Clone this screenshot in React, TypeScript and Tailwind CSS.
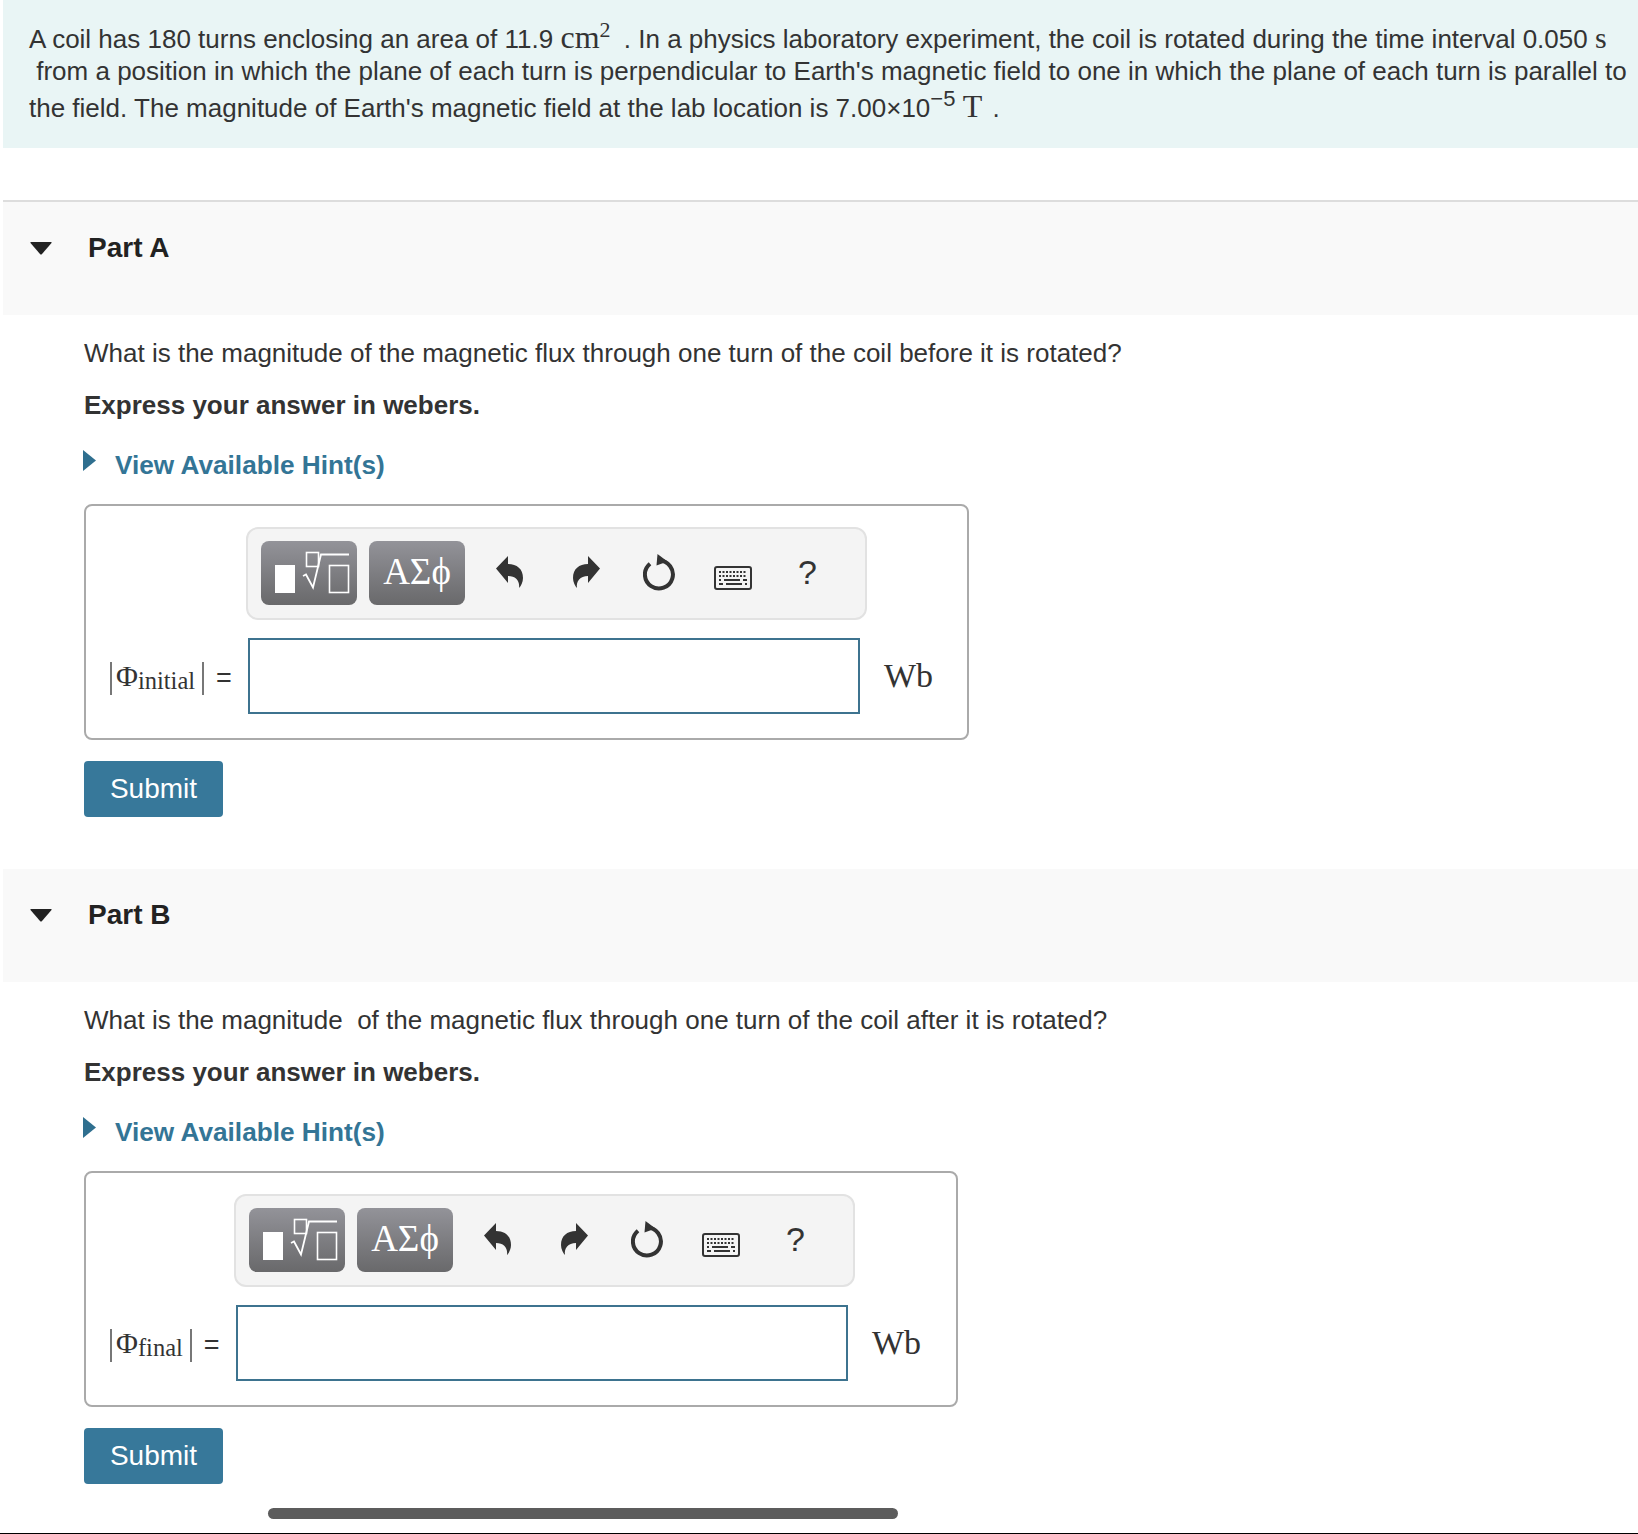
const serif = "font-['Liberation_Serif',serif]";

function ReplyIcon({ className }: { className: string }) {
  return (
    <svg className={className} width="27" height="32" viewBox="0 0 27 32">
      <path d="M0 12.5L12 0v8c9 0 15 5 15 14 0 4-2 8-4 10 1-7-3-12-11-12v7z" fill="#333" />
    </svg>
  );
}

function Toolbar({ left }: { left: number }) {
  return (
    <div
      className="flex h-[93px] w-[621px] items-start rounded-xl border-2 border-[#e2e2e2] bg-[#f4f4f4] pl-[13px] pt-3"
      style={{ marginLeft: left }}
    >
      <div className="h-16 w-24 rounded-lg bg-gradient-to-b from-[#939399] to-[#69696b]">
        <svg width="96" height="64" viewBox="0 0 96 64" fill="none" stroke="#fff" strokeWidth="1.6">
          <rect x="14" y="24" width="20" height="28" fill="#fff" stroke="none" />
          <rect x="45.5" y="11.5" width="12" height="14" />
          <path d="M42 35l3-1.500 7 13 8-33h28" strokeWidth="1.8" />
          <rect x="68.500" y="24.500" width="19" height="27" />
        </svg>
      </div>
      <div className={`ml-3 flex h-16 w-24 items-center justify-center rounded-lg bg-gradient-to-b from-[#939399] to-[#69696b] pb-1 text-[37px] leading-none text-white ${serif}`}>
        ΑΣϕ
      </div>
      <ReplyIcon className="ml-[31px] mt-[15px]" />
      <ReplyIcon className="ml-[50px] mt-[15px] -scale-x-100" />
      <svg className="ml-[43px] mt-[13px]" width="32" height="38" viewBox="0 0 32 38" fill="none">
        <path d="M7 9.700A14 14 0 1 0 16 6.500" stroke="#333" strokeWidth="4" />
        <path d="M14.500 0l10 7.500-11 4z" fill="#333" />
      </svg>
      <svg className="ml-[39px] mt-[25px]" width="38" height="24" viewBox="0 0 38 24" fill="none">
        <rect x="1" y="1" width="36" height="22" rx="2" stroke="#333" strokeWidth="2" />
        <path d="M5 6h28M5 10h28" stroke="#333" strokeWidth="2" strokeDasharray="2 1.500" />
        <path d="M5 14h2M10 14h16M29 14h4M5 18h4M12 18h16M31 18h2" stroke="#333" strokeWidth="2" />
      </svg>
      <div className="ml-[46px] mt-[11px] text-[34px] leading-[40px] text-[#333]">?</div>
    </div>
  );
}

function Part({
  name,
  question,
  sub,
  labelWidth,
  unitGap,
}: {
  name: string;
  question: string;
  sub: string;
  labelWidth: number;
  unitGap: number;
}) {
  return (
    <section>
      <div className="flex h-[113px] items-start bg-[#f9f9f9] pl-[27px] pt-[30px]">
        <svg className="mt-[10px]" width="22" height="13" viewBox="0 0 22 13">
          <path d="M1 0h20q1 0 .5 1L12 12q-1 1-2 0L.5 1Q0 0 1 0z" fill="#222" />
        </svg>
        <h2 className="ml-[36px] text-[28px] font-bold leading-[32px] text-[#222]">{name}</h2>
      </div>
      <div className="pl-[81px]">
        <p className="mt-[22px] text-[26px] leading-[32px] text-[#333] whitespace-pre">{question}</p>
        <p className="mt-5 text-[26px] font-bold leading-[32px] text-[#333]">Express your answer in webers.</p>
        <div className="mt-7 flex h-8 items-start">
          <svg className="-ml-px mt-[1px]" width="13" height="21" viewBox="0 0 13 21">
            <path d="M0 0l13 10.500L0 21z" fill="#2f6f8f" />
          </svg>
          <span className="ml-[19px] text-[26.2px] font-bold leading-[32px] text-[#337596]">View Available Hint(s)</span>
        </div>
        <div className="mt-[23px] w-fit rounded-lg border-2 border-[#aaa] pb-6 pt-[21px]">
          <Toolbar left={labelWidth - 2} />
          <div className="mt-[18px] flex items-center">
            <div className={`flex items-center pl-6 text-[#333] ${serif}`} style={{ width: labelWidth }}>
              <span className="mt-1 h-[33px] w-0 border-l-2 border-[#777]" />
              <span className="ml-1 text-[30px] leading-none">Φ</span>
              <span className="mt-[10px] text-[24.5px] leading-none">{sub}</span>
              <span className="ml-[7px] mt-1 h-[33px] w-0 border-l-2 border-[#777]" />
              <span className="ml-3 mt-1 font-['Liberation_Sans',sans-serif] text-[27px] leading-none">=</span>
            </div>
            <div className="h-[76px] w-[612px] border-2 border-[#3d738f] bg-white" />
            <div className={`ml-6 pb-[2px] text-[34px] text-[#333] ${serif}`} style={{ marginRight: unitGap }}>Wb</div>
          </div>
        </div>
        <button className="mt-[21px] block h-14 w-[139px] rounded bg-[#37789a] text-[28px] text-white">Submit</button>
      </div>
    </section>
  );
}

export default function App() {
  return (
    <div className="flex h-[1534px] w-[1638px] flex-col overflow-hidden border-b border-black bg-white pl-[3px] font-['Liberation_Sans',sans-serif]">
      <div className="h-[148px] whitespace-pre bg-[#e9f5f5] pl-[26px] pt-[21px] text-[26px] leading-[32px] text-[#333]">
        <p>
          A coil has 180 turns enclosing an area of 11.9 <span className={`text-[32px] ${serif}`}>cm<sup className="text-[22px]">2</sup></span> <span className="ml-[6px]">.</span> In a physics laboratory experiment, the coil is rotated during the time interval 0.050 <span className={`text-[30px] ${serif}`}>s</span>
        </p>
        <p> from a position in which the plane of each turn is perpendicular to Earth's magnetic field to one in which the plane of each turn is parallel to</p>
        <p className="mt-[3px]">
          the field. The magnitude of Earth's magnetic field at the lab location is 7.00×10<sup className="text-[22px]">−5</sup> <span className={`text-[32px] ${serif}`}>T</span> <span className="ml-[3px]">.</span>
        </p>
      </div>
      <div className="mt-[52px] h-[2px] bg-[#ddd]" />
      <Part name="Part A" question="What is the magnitude of the magnetic flux through one turn of the coil before it is rotated?" sub="initial" labelWidth={162} unitGap={34} />
      <div className="h-[52px]" />
      <Part name="Part B" question="What is the magnitude  of the magnetic flux through one turn of the coil after it is rotated?" sub="final" labelWidth={150} unitGap={35} />
      <div className="ml-[265px] mt-6 h-[11px] w-[630px] rounded-full bg-[#5c5c5c]" />
    </div>
  );
}
